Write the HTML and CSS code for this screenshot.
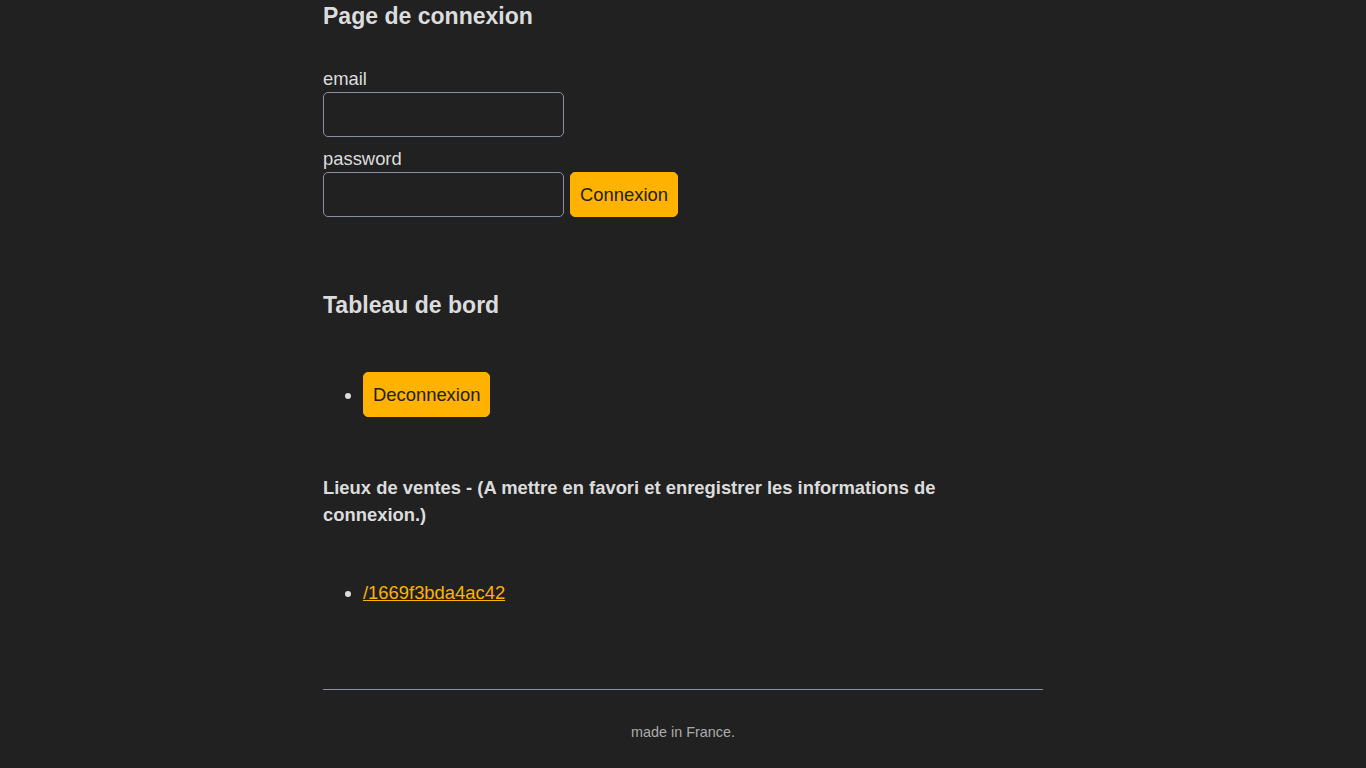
FILE: index.html
```html
<!DOCTYPE html>
<html lang="fr">
<head>
<meta charset="utf-8">
<title>Page de connexion</title>
<link rel="stylesheet" href="styles.css">
</head>
<body>
<main class="page">
  <h4 class="title">Page de connexion</h4>
  <form class="login">
    <label class="field-label" for="email">email</label>
    <input class="field" id="email" type="email">
    <label class="field-label" for="password">password</label>
    <div class="row">
      <input class="field" id="password" type="password">
      <button class="btn" type="button">Connexion</button>
    </div>
  </form>

  <h4 class="title title-dash">Tableau de bord</h4>
  <ul class="list list-actions">
    <li><button class="btn" type="button">Deconnexion</button></li>
  </ul>

  <h5 class="subtitle">Lieux de ventes - (A mettre en favori et enregistrer les informations de connexion.)</h5>
  <ul class="list list-links">
    <li><a class="link" href="#">/1669f3bda4ac42</a></li>
  </ul>
</main>
<footer class="footer">made in France.</footer>
<script src="script.js"></script>
</body>
</html>
```
FILE: styles.css
```css
html {
  background: #212121;
  color-scheme: dark;
}
body {
  margin: 0;
  background: #212121;
  color: #dcdcdc;
  font-family: "Liberation Sans", Arial, Helvetica, sans-serif;
  font-size: 18.4px;
  line-height: 1.5;
}
.page {
  width: 720px;
  margin: 0 auto;
  padding-top: 22.3px;
}
.title {
  font-size: 23.04px;
  line-height: 1.5;
  font-weight: bold;
  margin: 0;
}
.login {
  margin: 30.7px 0 0;
}
.field-label {
  display: block;
  line-height: 27.6px;
}
.field {
  display: block;
  box-sizing: border-box;
  width: 241px;
  height: 45px;
  margin: 0 0 7.4px;
  padding: 8px;
  font: inherit;
  color: #dcdcdc;
  background: #212121;
  border: 1px solid #898ea4;
  border-radius: 5px;
  outline: none;
}
.row {
  display: flex;
  align-items: flex-start;
  gap: 6px;
}
.row .field {
  margin: 0;
}
.btn {
  display: inline-block;
  box-sizing: border-box;
  height: 45px;
  padding: 8px 9px;
  font: inherit;
  line-height: 27px;
  color: #212121;
  background: #ffb300;
  border: 1px solid #ffb300;
  border-radius: 5px;
  cursor: pointer;
  vertical-align: top;
}
.title-dash {
  margin-top: 71px;
}
.list {
  margin: 0;
  padding-left: 40px;
}
.list-actions {
  margin-top: 49.7px;
}
.list-actions li {
  line-height: 45px;
}
.subtitle {
  font-size: 18.4px;
  line-height: 27.6px;
  font-weight: bold;
  margin: 56.2px 0 0;
}
.list-links {
  margin-top: 50.4px;
}
.link {
  color: #ffb300;
}
.footer {
  width: 720px;
  margin: 82.2px auto 0;
  box-sizing: border-box;
  padding: 32px 16px 24px;
  border-top: 1px solid #898ea4;
  color: #ababab;
  font-size: 14.4px;
  line-height: 1.5;
  text-align: center;
}
```
FILE: script.js
```js
window.scrollTo(0, document.documentElement.scrollHeight);
```
